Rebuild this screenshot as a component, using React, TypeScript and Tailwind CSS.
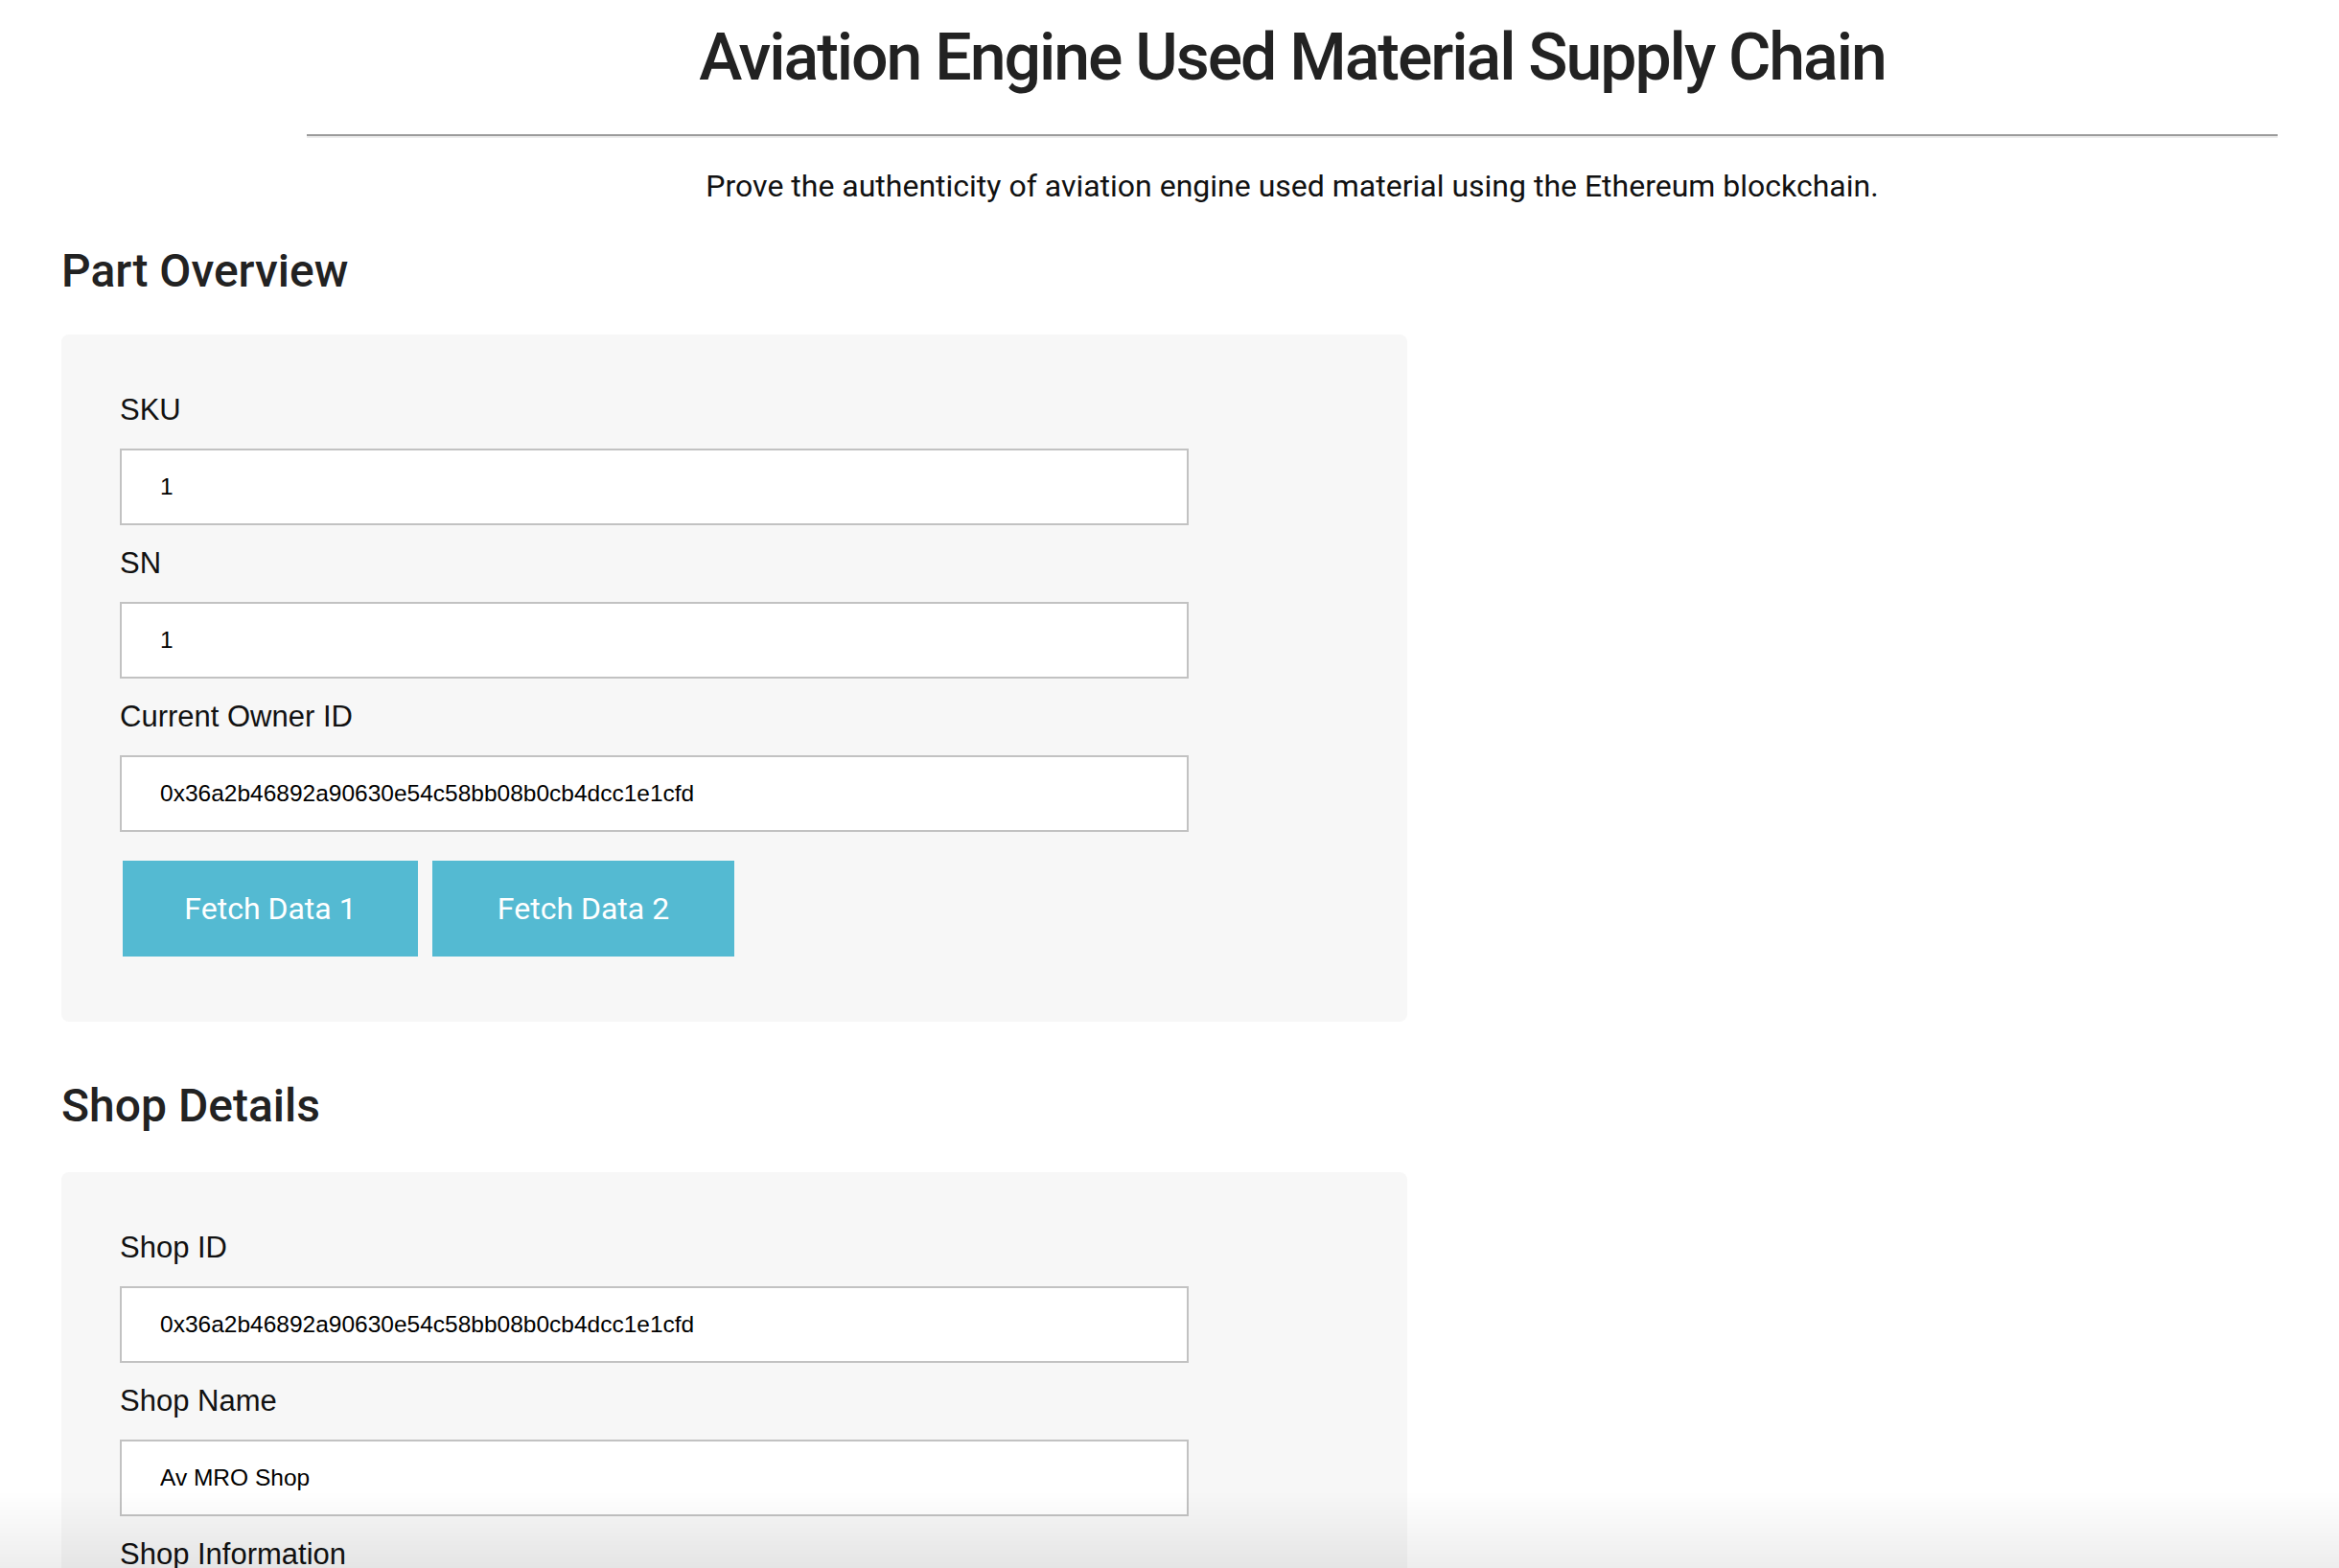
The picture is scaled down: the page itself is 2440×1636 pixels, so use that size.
import React from 'react';

const HEX = '0x36a2b46892a90630e54c58bb08b0cb4dcc1e1cfd';

const Field: React.FC<{ label: string; value: string }> = ({ label, value }) => (
  <div className="mb-4">
    <label className="block text-[31px] leading-[48px] text-[#111] mb-4 font-['Liberation_Sans',Arial,sans-serif]">
      {label}
    </label>
    <input
      readOnly
      value={value}
      className="block w-[1115px] h-[80px] border-2 border-[#c2c2c2] bg-white pl-[40px] text-[24.5px] text-black outline-none font-['Liberation_Sans',Arial,sans-serif]"
    />
  </div>
);

const SectionTitle: React.FC<{ children: React.ReactNode; className?: string }> = ({ children, className }) => (
  <h3 className={`text-[48px] leading-[58px] font-medium text-[#222] ${className ?? 'mb-[40px]'}`}>{children}</h3>
);

const App: React.FC = () => {
  return (
    <div className="min-h-screen bg-white font-['Roboto',sans-serif] px-[64px]">
      <header className="ml-[256px] pt-[18px] text-center">
        <h1 className="text-[68px] leading-[84px] font-medium tracking-[-0.03em] text-[#222]">
          Aviation Engine Used Material Supply Chain
        </h1>
        <hr className="mt-[38px] border-0 border-t-2 border-t-[#9b9b9b] border-b-2 border-b-[#ededed]" />
        <p className="mt-[28px] text-[32px] leading-[45px] text-[#111]">
          Prove the authenticity of aviation engine used material using the Ethereum blockchain.
        </p>
      </header>

      <section className="mt-[37px]">
        <SectionTitle className="mb-[37px]">Part Overview</SectionTitle>
        <div className="w-[1404px] bg-[#f7f7f7] rounded-[8px] pl-[61px] pt-[55px] pb-[68px]">
          <Field label="SKU" value="1" />
          <Field label="SN" value="1" />
          <Field label="Current Owner ID" value={HEX} />
          <div className="flex gap-[15px] ml-[3px] mt-[30px]">
            <button className="w-[308px] h-[100px] bg-[#54bad2] text-white text-[32px]">Fetch Data 1</button>
            <button className="w-[315px] h-[100px] bg-[#54bad2] text-white text-[32px]">Fetch Data 2</button>
          </div>
        </div>
      </section>

      <section className="mt-[59px] pb-[80px]">
        <SectionTitle>Shop Details</SectionTitle>
        <div className="w-[1404px] bg-[#f7f7f7] rounded-[8px] pl-[61px] pt-[55px] pb-[68px]">
          <Field label="Shop ID" value={HEX} />
          <Field label="Shop Name" value="Av MRO Shop" />
          <Field label="Shop Information" value="" />
          <Field label="Shop Location" value="" />
        </div>
      </section>

      <div className="pointer-events-none fixed inset-x-0 bottom-0 h-[80px] bg-gradient-to-b from-transparent to-black/[0.07]" />
    </div>
  );
};

export default App;
